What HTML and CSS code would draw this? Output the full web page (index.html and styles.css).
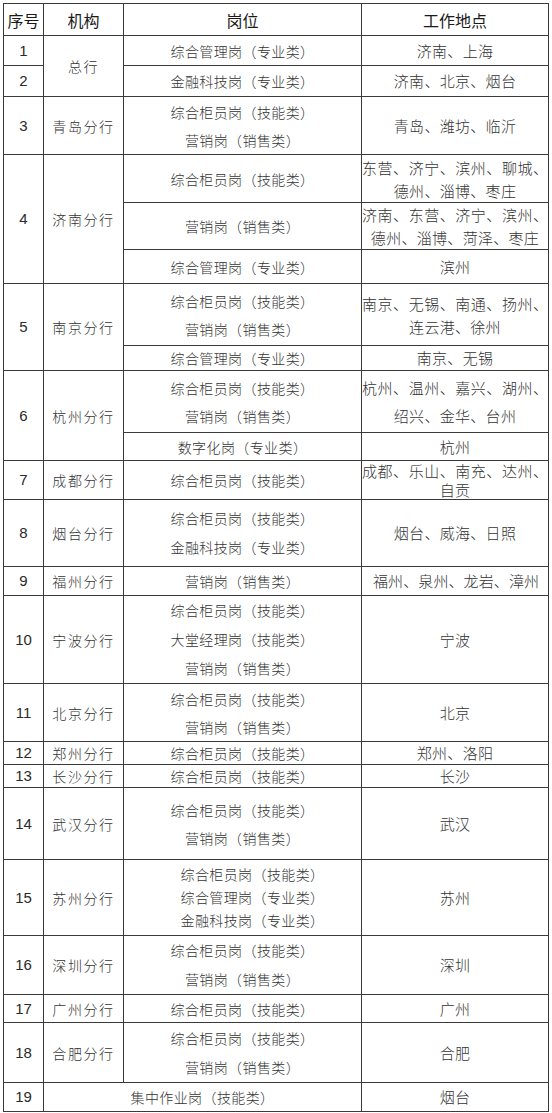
FILE: index.html
```html
<!DOCTYPE html>
<html lang="zh-CN">
<head>
<meta charset="utf-8">
<title>招聘岗位</title>
<link rel="stylesheet" href="styles.css">
</head>
<body>
<table class="jobs">
  <colgroup>
    <col class="c-no">
    <col class="c-org">
    <col class="c-pos">
    <col class="c-loc">
  </colgroup>
  <thead>
    <tr class="h32">
      <th>序号</th><th>机构</th><th>岗位</th><th>工作地点</th>
    </tr>
  </thead>
  <tbody>
    <tr class="h30">
      <td class="no">1</td>
      <td class="org" rowspan="2">总行</td>
      <td class="pos">综合管理岗（专业类）</td>
      <td class="loc">济南、上海</td>
    </tr>
    <tr class="h31">
      <td class="no">2</td>
      <td class="pos">金融科技岗（专业类）</td>
      <td class="loc">济南、北京、烟台</td>
    </tr>
    <tr class="h58">
      <td class="no">3</td>
      <td class="org">青岛分行</td>
      <td class="pos lh28"><div>综合柜员岗（技能类）</div><div>营销岗（销售类）</div></td>
      <td class="loc">青岛、潍坊、临沂</td>
    </tr>
    <tr class="h48">
      <td class="no" rowspan="3">4</td>
      <td class="org" rowspan="3">济南分行</td>
      <td class="pos">综合柜员岗（技能类）</td>
      <td class="loc lh23"><div class="fill">东营、济宁、滨州、聊城、</div><div>德州、淄博、枣庄</div></td>
    </tr>
    <tr class="h47">
      <td class="pos">营销岗（销售类）</td>
      <td class="loc lh23"><div class="fill">济南、东营、济宁、滨州、</div><div>德州、淄博、菏泽、枣庄</div></td>
    </tr>
    <tr class="h34">
      <td class="pos">综合管理岗（专业类）</td>
      <td class="loc">滨州</td>
    </tr>
    <tr class="h62">
      <td class="no" rowspan="2">5</td>
      <td class="org" rowspan="2">南京分行</td>
      <td class="pos lh28"><div>综合柜员岗（技能类）</div><div>营销岗（销售类）</div></td>
      <td class="loc lh23"><div class="fill">南京、无锡、南通、扬州、</div><div>连云港、徐州</div></td>
    </tr>
    <tr class="h25">
      <td class="pos">综合管理岗（专业类）</td>
      <td class="loc">南京、无锡</td>
    </tr>
    <tr class="h62">
      <td class="no" rowspan="2">6</td>
      <td class="org" rowspan="2">杭州分行</td>
      <td class="pos lh28"><div>综合柜员岗（技能类）</div><div>营销岗（销售类）</div></td>
      <td class="loc lh28"><div class="fill">杭州、温州、嘉兴、湖州、</div><div>绍兴、金华、台州</div></td>
    </tr>
    <tr class="h28">
      <td class="pos">数字化岗（专业类）</td>
      <td class="loc">杭州</td>
    </tr>
    <tr class="h39">
      <td class="no">7</td>
      <td class="org">成都分行</td>
      <td class="pos">综合柜员岗（技能类）</td>
      <td class="loc lh19"><div class="fill">成都、乐山、南充、达州、</div><div>自贡</div></td>
    </tr>
    <tr class="h67">
      <td class="no">8</td>
      <td class="org">烟台分行</td>
      <td class="pos lh29"><div>综合柜员岗（技能类）</div><div>金融科技岗（专业类）</div></td>
      <td class="loc">烟台、威海、日照</td>
    </tr>
    <tr class="h29">
      <td class="no">9</td>
      <td class="org">福州分行</td>
      <td class="pos">营销岗（销售类）</td>
      <td class="loc wide"><div class="fill">福州、泉州、龙岩、漳州</div></td>
    </tr>
    <tr class="h86">
      <td class="no">10</td>
      <td class="org">宁波分行</td>
      <td class="pos lh29"><div>综合柜员岗（技能类）</div><div>大堂经理岗（技能类）</div><div>营销岗（销售类）</div></td>
      <td class="loc">宁波</td>
    </tr>
    <tr class="h58">
      <td class="no">11</td>
      <td class="org">北京分行</td>
      <td class="pos lh28"><div>综合柜员岗（技能类）</div><div>营销岗（销售类）</div></td>
      <td class="loc">北京</td>
    </tr>
    <tr class="h23">
      <td class="no">12</td>
      <td class="org">郑州分行</td>
      <td class="pos">综合柜员岗（技能类）</td>
      <td class="loc">郑州、洛阳</td>
    </tr>
    <tr class="h23">
      <td class="no">13</td>
      <td class="org">长沙分行</td>
      <td class="pos">综合柜员岗（技能类）</td>
      <td class="loc">长沙</td>
    </tr>
    <tr class="h72">
      <td class="no">14</td>
      <td class="org">武汉分行</td>
      <td class="pos lh28"><div>综合柜员岗（技能类）</div><div>营销岗（销售类）</div></td>
      <td class="loc">武汉</td>
    </tr>
    <tr class="h76">
      <td class="no">15</td>
      <td class="org">苏州分行</td>
      <td class="pos lh23 shift"><div>综合柜员岗（技能类）</div><div>综合管理岗（专业类）</div><div>金融科技岗（专业类）</div></td>
      <td class="loc">苏州</td>
    </tr>
    <tr class="h59">
      <td class="no">16</td>
      <td class="org">深圳分行</td>
      <td class="pos lh29"><div>综合柜员岗（技能类）</div><div>营销岗（销售类）</div></td>
      <td class="loc">深圳</td>
    </tr>
    <tr class="h28">
      <td class="no">17</td>
      <td class="org">广州分行</td>
      <td class="pos">综合柜员岗（技能类）</td>
      <td class="loc">广州</td>
    </tr>
    <tr class="h60">
      <td class="no">18</td>
      <td class="org">合肥分行</td>
      <td class="pos lh29"><div>综合柜员岗（技能类）</div><div>营销岗（销售类）</div></td>
      <td class="loc">合肥</td>
    </tr>
    <tr class="h29">
      <td class="no">19</td>
      <td class="pos" colspan="2">集中作业岗（技能类）</td>
      <td class="loc">烟台</td>
    </tr>
  </tbody>
</table>
</body>
</html>
```

FILE: styles.css
```css
html, body {
  margin: 0;
  padding: 0;
  background: #ffffff;
}

body {
  padding: 3px 4px 3px 3px;
  font-family: "Noto Sans CJK SC", "Noto Sans", sans-serif;
  color: #2a2a2a;
}

.jobs {
  width: 545px;
  table-layout: fixed;
  border-collapse: collapse;
  border: 1px solid #2e2e2e;
}

.c-no { width: 40px; }
.c-org { width: 80px; }
.c-pos { width: 238px; }
.c-loc { width: 187px; }

.jobs th,
.jobs td {
  border: 1px solid #3a3a3a;
  padding: 0;
  text-align: center;
  vertical-align: middle;
  line-height: 20px;
}

.jobs th {
  font-size: 16px;
  font-weight: 400;
  color: #1a1a1a;
}

.no {
  font-family: "Liberation Sans", Arial, sans-serif;
  font-size: 15px;
  color: #2a2a2a;
}

.org {
  font-size: 14px;
  font-weight: 300;
  letter-spacing: 1.6px;
  color: #333;
}

.pos {
  font-size: 14px;
  font-weight: 300;
  letter-spacing: 0.4px;
  color: #333;
}

.pos.shift {
  padding-left: 20px;
}

.loc {
  font-size: 15px;
  font-weight: 300;
  letter-spacing: 0.3px;
  color: #333;
  padding: 0 2px 0 3px;
}

.loc.wide {
  padding: 0 9px 0 11px;
}

.fill {
  text-align: justify;
  text-align-last: justify;
  letter-spacing: 0;
}

.jobs td.lh19 { line-height: 19px; }
.jobs td.lh23 { line-height: 23px; }
.jobs td.lh28 { line-height: 28px; }
.jobs td.lh29 { line-height: 29px; }

.h23 { height: 23px; }
.h25 { height: 25px; }
.h28 { height: 28px; }
.h29 { height: 29px; }
.h30 { height: 30px; }
.h31 { height: 31px; }
.h32 { height: 32px; }
.h34 { height: 34px; }
.h39 { height: 39px; }
.h47 { height: 47px; }
.h48 { height: 48px; }
.h58 { height: 58px; }
.h59 { height: 59px; }
.h60 { height: 60px; }
.h62 { height: 62px; }
.h67 { height: 67px; }
.h72 { height: 72px; }
.h76 { height: 76px; }
.h86 { height: 86px; }
```
